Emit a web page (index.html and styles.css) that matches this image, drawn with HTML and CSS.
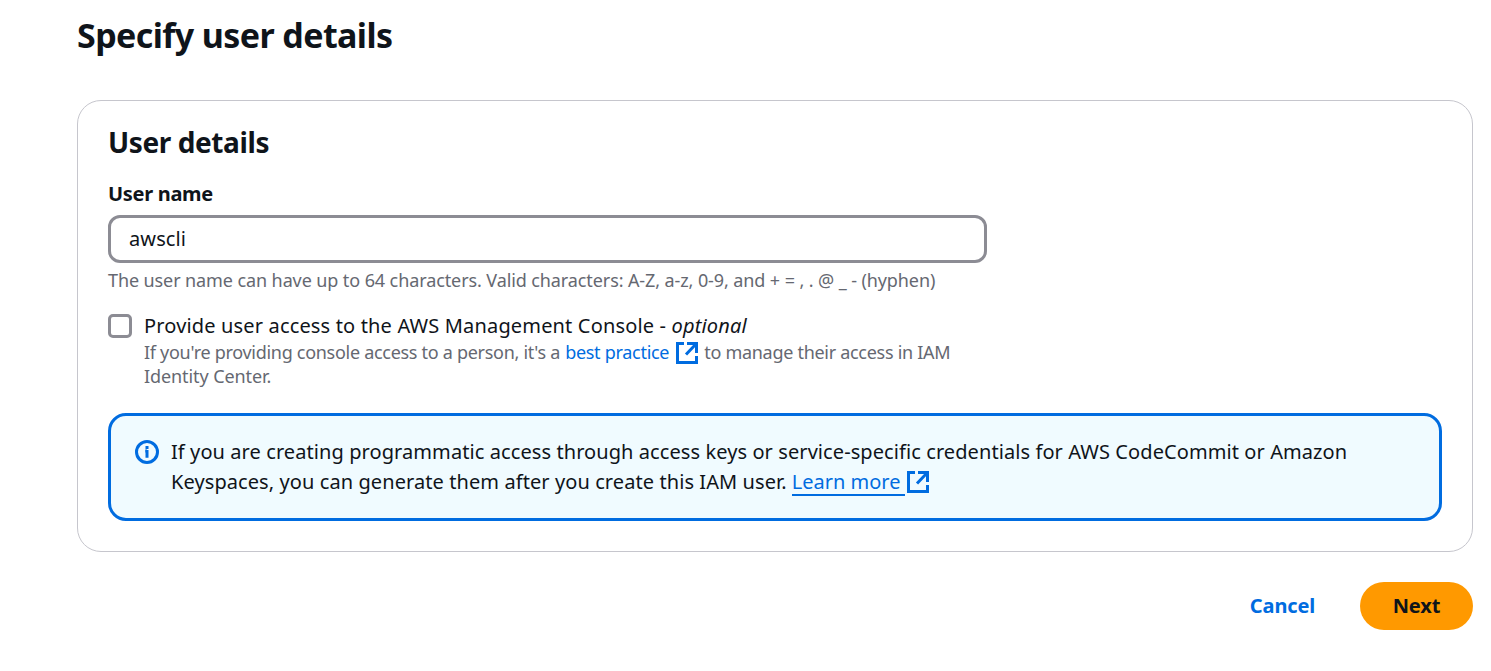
FILE: index.html
```html
<!DOCTYPE html>
<html lang="en">
<head>
<meta charset="utf-8">
<title>Specify user details</title>
<link rel="stylesheet" href="styles.css">
</head>
<body>
<main class="page">
  <h1 class="page-title">Specify user details</h1>
  <section class="card">
    <h2 class="card-title">User details</h2>
    <label class="label" for="username">User name</label>
    <input class="input" id="username" type="text" value="awscli">
    <p class="hint">The user name can have up to 64 characters. Valid characters: A-Z, a-z, 0-9, and + = , . @ _ - (hyphen)</p>
    <div class="option">
      <span class="checkbox" role="checkbox" aria-checked="false"></span>
      <div class="option-body">
        <p class="option-title">Provide user access to the AWS Management Console - <em>optional</em></p>
        <p class="option-text">
          <span>If you're providing console access to a person, it's a</span>
          <a class="link"><span>best practice</span><svg class="ext" viewBox="0 0 24 24"><path d="M9 2.500H2.500V21.500H21.500V15M12 2.500H21.500V12M21 3L11 13.500"/></svg></a>
          <span>to manage their access in IAM</span>
        </p>
        <p class="option-text option-end">Identity Center.</p>
      </div>
    </div>
    <div class="alert">
      <svg class="info" viewBox="0 0 24 24"><circle cx="12" cy="12" r="10.500"/><path d="M12 17.700V10M12 9V6M10.200 11H12"/></svg>
      <div class="alert-body">
        <p>If you are creating programmatic access through access keys or service-specific credentials for AWS CodeCommit or Amazon</p>
        <p class="alert-line"><span>Keyspaces, you can generate them after you create this IAM user.</span> <a class="link learn">Learn more</a><svg class="ext" viewBox="0 0 24 24"><path d="M9 2.500H2.500V21.500H21.500V15M12 2.500H21.500V12M21 3L11 13.500"/></svg></p>
      </div>
    </div>
  </section>
  <footer class="actions">
    <button class="cancel">Cancel</button>
    <button class="next">Next</button>
  </footer>
</main>
</body>
</html>
```
FILE: styles.css
```css
* { box-sizing: border-box; }
body { margin: 0; background: #fff; color: #0f141a; font-family: "Noto Sans", sans-serif; }
h1, h2, p { margin: 0; white-space: nowrap; }
.page { padding: 11px 18px 0 77px; }
.page-title { height: 89px; font-size: 34px; line-height: 48px; font-weight: 700; letter-spacing: -0.6px; }
.card { height: 452px; padding: 23px 30px 30px; border: 1px solid #c6c6cd; border-radius: 24px; }
.card-title { font-size: 28px; line-height: 36px; font-weight: 700; letter-spacing: -0.4px; }
.label { display: block; margin-top: 19px; font-size: 20px; line-height: 30px; font-weight: 700; letter-spacing: -0.3px; }
.input { display: block; width: 879px; height: 48px; margin-top: 6px; padding: 0 18px 2px; border: 3px solid #8c8c94; border-radius: 12px; outline: none; background: #fff; color: #0f141a; font: 20px "Noto Sans", sans-serif; letter-spacing: 0.1px; }
.hint { margin-top: 5px; font-size: 18px; line-height: 24px; letter-spacing: -0.1px; color: #656871; }
.option { display: flex; gap: 12px; margin-top: 19px; }
.checkbox { width: 24px; height: 24px; margin-top: 3px; border: 3px solid #8c8c94; border-radius: 5px; }
.option-title { font-size: 20px; line-height: 30px; letter-spacing: 0.16px; }
.option-text { display: flex; gap: 5px; margin-top: -1px; font-size: 18px; line-height: 24px; letter-spacing: -0.29px; color: #656871; }
.option-end { margin-top: 0; letter-spacing: -0.09px; }
.link { display: flex; align-items: center; gap: 6px; color: #006ce0; }
.ext { width: 24px; height: 24px; fill: none; stroke: #006ce0; stroke-width: 3; }
.option-text .ext { position: relative; top: 1px; }
.alert { display: flex; gap: 12px; height: 108px; margin-top: 25px; padding: 21px 24px; border: 3px solid #006ce0; border-radius: 18px; background: #f0fbff; font-size: 20px; line-height: 30px; letter-spacing: 0.085px; }
.info { width: 24px; height: 24px; margin-top: 3px; fill: none; stroke: #006ce0; stroke-width: 3; }
.alert-line { display: flex; align-items: center; gap: 5px; }
.learn { height: 28px; padding: 2px 5px 0 0; border-bottom: 2px solid #006ce0; letter-spacing: 0; line-height: 26px; }
.alert-line .ext { margin-left: -4px; }
.actions { display: flex; justify-content: flex-end; gap: 15px; margin-top: 30px; }
button { height: 48px; padding: 0 0 2px; border: 0; border-radius: 24px; background: none; font: 700 20px "Noto Sans", sans-serif; letter-spacing: -0.1px; }
.cancel { width: 125px; color: #006ce0; }
.next { width: 113px; background: #ff9900; color: #0f141a; }
```
